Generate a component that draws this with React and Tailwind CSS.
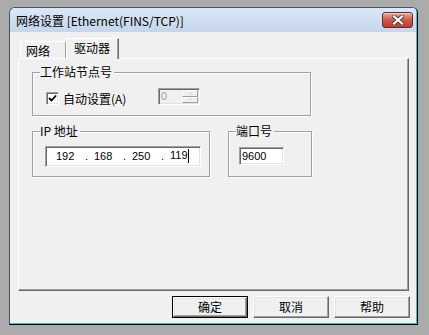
const cjk = "font-['Noto_Sans_CJK_SC',sans-serif]"
const sunken = "border border-t-[#a0a0a0] border-l-[#a0a0a0] border-r-white border-b-white shadow-[inset_1px_1px_0_#696969,inset_-1px_-1px_0_#e3e3e3]"
const etched = "relative border border-[#a0a0a0] shadow-[inset_1px_1px_0_#fff,1px_1px_0_#fff]"

function GroupBox({ label, className, children }) {
  return (
    <div className={`${etched} ${className}`}>
      <span className={`absolute left-[7px] top-[-8px] bg-[#f0f0f0] pr-[2px] text-[12px] leading-[13px] text-black ${cjk}`}>
        {label}
      </span>
      {children}
    </div>
  )
}

function Button({ label, isDefault }) {
  return (
    <div className={`w-[76px] h-[22px] ${isDefault ? 'border border-black' : ''}`}>
      <div className="w-full h-full flex items-center justify-center bg-[#f0f0f0] border border-t-white border-l-white border-r-[#696969] border-b-[#696969] shadow-[inset_-1px_-1px_0_#a0a0a0,inset_1px_1px_0_#e3e3e3]">
        <span className={`text-[12px] leading-[12px] text-black ${cjk}`}>{label}</span>
      </div>
    </div>
  )
}

export default function App() {
  const ip = ['192', '168', '250', '119']

  return (
    <div className="w-[429px] h-[335px] bg-[#ababab] pt-[7px] pl-[9px] overflow-hidden">
      <div className="w-[409px] h-[318px] flex flex-col rounded-t-[6px] border border-[#44546a] border-r-black border-b-black bg-[#f0f0f0] overflow-hidden">
        {/* title bar */}
        <div className="h-[24px] shrink-0 flex items-start justify-between bg-gradient-to-b from-[#dde8f5] to-[#c3d6ec] border-r border-[#3bbde3]">
          <span className={`pl-[6px] pt-[6px] text-[12px] leading-[13px] text-black ${cjk}`}>
            网络设置 [Ethernet(FINS/TCP)]
          </span>
          <div className="mt-[4px] mr-[3px] w-[31px] h-[16px] rounded-[3px] border border-[#6b2b26] bg-gradient-to-b from-[#e8a99b] via-[#cd5a48] to-[#b8402e] flex items-center justify-center shadow-[inset_0_1px_0_#f3c9bf]">
            <svg width="12" height="10" viewBox="0 0 12 10">
              <path d="M2 1.5 L10 8.5 M10 1.5 L2 8.5" stroke="#5a3a3a" strokeWidth="4" strokeLinecap="square" />
              <path d="M2 1.5 L10 8.5 M10 1.5 L2 8.5" stroke="#fff" strokeWidth="2.2" strokeLinecap="square" />
            </svg>
          </div>
        </div>

        {/* client area */}
        <div className="flex-1 flex flex-col border-r border-b border-[#3bbde3] pl-[8px]">
          {/* tabs */}
          <div className="mt-[6px] h-[20px] flex items-end pl-[2px] relative z-10">
            <div className="w-[46px] h-[17px] flex items-start pl-[5px] pt-[2px] border-t border-l border-white border-r border-r-[#a0a0a0]">
              <span className={`text-[12px] leading-[13px] text-black ${cjk}`}>网络</span>
            </div>
            <div className="w-[53px] h-[21px] -mb-[1px] flex items-start pl-[7px] pt-[2px] bg-[#f0f0f0] border-t border-l border-white border-r border-r-[#696969] shadow-[inset_-1px_0_0_#a0a0a0]">
              <span className={`text-[12px] leading-[13px] text-black ${cjk}`}>驱动器</span>
            </div>
          </div>

          {/* tab panel */}
          <div className="w-[391px] h-[233px] border border-t-white border-l-white border-r-[#696969] border-b-[#696969] shadow-[inset_-1px_-1px_0_#a0a0a0] pl-[13px] pt-[13px] flex flex-col">
            <GroupBox label="工作站节点号" className="w-[279px] h-[44px] pl-[13px] pt-[15px]">
              <div className="h-[17px] flex items-start">
                <div className="mt-[4px] w-[13px] h-[13px] bg-white border border-t-[#a0a0a0] border-l-[#a0a0a0] border-r-white border-b-white shadow-[inset_1px_1px_0_#696969,inset_-1px_-1px_0_#e3e3e3] flex items-center justify-center">
                  <svg width="9" height="9" viewBox="0 0 9 9">
                    <path d="M1 4 L3.5 6.5 L8 1.5" stroke="#000" strokeWidth="1.8" fill="none" />
                  </svg>
                </div>
                <span className={`ml-[4px] mt-[4px] w-[95px] text-[12px] leading-[13px] text-black ${cjk}`}>自动设置(A)</span>
                <div className={`w-[42px] h-[17px] flex ${sunken} bg-[#f0f0f0]`}>
                  <span className="flex-1 pl-[2px] pt-[2px] text-[11px] leading-[11px] text-[#a0a0a0] font-['Liberation_Sans',sans-serif]">0</span>
                  <div className="w-[17px] flex flex-col py-[1px] pr-[1px]">
                    <div className="flex-1 flex items-center justify-center border border-t-white border-l-white border-r-[#a0a0a0] border-b-[#a0a0a0]">
                      <span className="w-[1px] h-[1px] bg-[#a0a0a0]" />
                    </div>
                    <div className="flex-1 flex items-center justify-center border border-t-white border-l-white border-r-[#a0a0a0] border-b-[#a0a0a0]">
                      <span className="w-[1px] h-[1px] bg-[#a0a0a0]" />
                    </div>
                  </div>
                </div>
              </div>
            </GroupBox>

            <div className="mt-[15px] flex">
              <GroupBox label="IP 地址" className="w-[178px] h-[46px] pl-[12px] pt-[14px]">
                <div className={`w-[156px] h-[21px] bg-white ${sunken} flex items-center pl-[10px]`}>
                  {ip.map((part, i) => (
                    <div key={i} className="flex items-center">
                      <span className="w-[29px] text-[11px] leading-[11px] text-black font-['Liberation_Sans',sans-serif]">
                        {part}
                        {i === 3 && <span className="inline-block w-[1px] h-[14px] bg-black align-middle -mt-[2px]" />}
                      </span>
                      {i < 3 && <span className="w-[9px] text-[11px] leading-[11px] text-black font-['Liberation_Sans',sans-serif]">.</span>}
                    </div>
                  ))}
                </div>
              </GroupBox>

              <GroupBox label="端口号" className="ml-[18px] w-[84px] h-[46px] pl-[10px] pt-[15px]">
                <div className={`w-[45px] h-[18px] bg-white ${sunken} flex items-center pl-[2px]`}>
                  <span className="text-[11px] leading-[11px] text-black font-['Liberation_Sans',sans-serif]">9600</span>
                </div>
              </GroupBox>
            </div>
          </div>

          {/* buttons */}
          <div className="mt-[5px] flex justify-end gap-[5px] pr-[6px]">
            <Button label="确定" isDefault />
            <Button label="取消" />
            <Button label="帮助" />
          </div>
        </div>
      </div>
    </div>
  )
}
